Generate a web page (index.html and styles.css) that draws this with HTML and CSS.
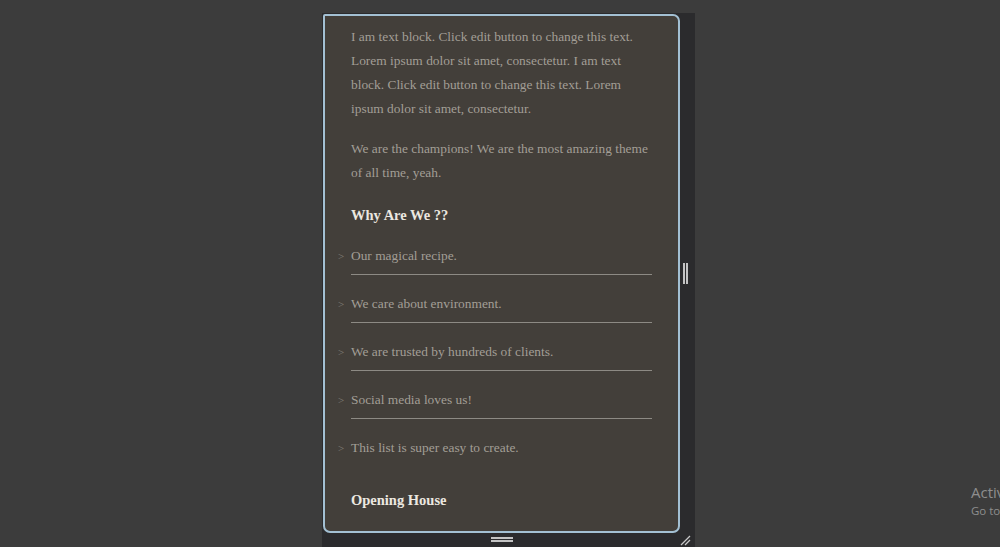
FILE: index.html
```html
<!DOCTYPE html>
<html lang="en">
<head>
    <meta charset="UTF-8">
    <title>Text block preview</title>
    <link rel="stylesheet" href="styles.css">
</head>
<body>
<div class="device">
    <div class="card">
        <p>I am text block. Click edit button to change this text. Lorem ipsum dolor sit amet, consectetur. I am text block. Click edit button to change this text. Lorem ipsum dolor sit amet, consectetur.</p>
        <p>We are the champions! We are the most amazing theme of all time, yeah.</p>
        <h3>Why Are We ??</h3>
        <ul class="why">
            <li>Our magical recipe.</li>
            <li>We care about environment.</li>
            <li>We are trusted by hundreds of clients.</li>
            <li>Social media loves us!</li>
            <li>This list is super easy to create.</li>
        </ul>
        <h3 class="opening">Opening House</h3>
    </div>
    <div class="side">
        <span class="grip-v"></span>
    </div>
    <div class="bottom">
        <span class="grip-h"></span>
    </div>
    <div class="corner">
        <svg width="12" height="12" viewBox="0 0 12 12">
            <line x1="1" y1="11" x2="10" y2="2" stroke="#c8c8c8" stroke-width="1.2"/>
            <line x1="5" y1="11" x2="10" y2="6" stroke="#c8c8c8" stroke-width="1.2"/>
        </svg>
    </div>
</div>

<!-- windows watermark -->
<div class="activate">
    <div class="act-title">Activate Windows</div>
    <div class="act-sub">Go to Settings to activate Windows.</div>
</div>
</body>
</html>
```

FILE: styles.css
```css
body {
    margin: 0;
    height: 547px;
    overflow: hidden;
    background-color: #3c3c3c;
    font-family: "Liberation Serif", "DejaVu Serif", serif;
}
.device {
    margin: 13px 0 0 322px;
    width: 373px;
    height: 534px;
    padding: 1px 0 0 1px;
    box-sizing: border-box;
    background-color: #2b2b2d;
    display: grid;
    grid-template-columns: 357px 15px;
    grid-template-rows: 519px 14px;
}
.card {
    background-color: #433f3a;
    border: 2px solid #a3c0d3;
    border-radius: 2px 7px 7px 7px;
    padding: 9px 26px 0 26px;
    overflow: hidden;
}
.card p {
    margin: 0 0 16px 0;
    font-size: 13.4px;
    line-height: 24px;
    color: #a29e96;
}
.card h3 {
    margin: 18px 0 0 0;
    font-size: 14.5px;
    line-height: 24px;
    font-weight: bold;
    color: #ece8e0;
}
.card h3.opening {
    margin-top: 22px;
}
.why {
    list-style: none;
    margin: 0;
    padding: 0;
}
.why li {
    position: relative;
    padding: 17px 0 6px 0;
    line-height: 24px;
    font-size: 13.4px;
    color: #a29e96;
    border-bottom: 1px solid #8d8a84;
}
.why li:last-child {
    border-bottom: none;
}
.why li::before {
    content: ">";
    position: absolute;
    left: -13px;
    font-size: 11px;
    color: #858079;
}
.side {
    display: flex;
    align-items: center;
    justify-content: center;
}
.grip-v {
    width: 1px;
    height: 21px;
    border-left: 2px solid #c4c4c4;
    border-right: 2px solid #c4c4c4;
    margin: 0 4px 0 0;
}
.bottom {
    display: flex;
    align-items: center;
    justify-content: center;
}
.grip-h {
    width: 22px;
    height: 1px;
    border-top: 2px solid #c4c4c4;
    border-bottom: 2px solid #c4c4c4;
    margin: 0 0 1px 0;
}
.corner {
    display: flex;
    align-items: flex-end;
    justify-content: flex-end;
    padding: 0 3px 1px 0;
}
.activate {
    position: absolute;
    left: 971px;
    top: 482px;
    white-space: nowrap;
    font-family: "Open Sans", "Liberation Sans", sans-serif;
    color: #8e8e8e;
}
.act-title {
    font-size: 15px;
    line-height: 20px;
}
.act-sub {
    font-size: 11.5px;
    line-height: 18px;
}
```
